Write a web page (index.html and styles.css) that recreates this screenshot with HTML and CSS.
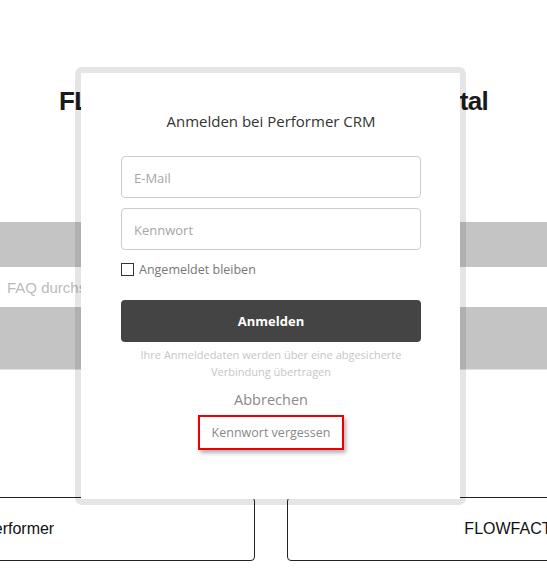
FILE: index.html
```html
<!DOCTYPE html>
<html lang="de">
<head>
<meta charset="utf-8">
<title>Anmelden bei Performer CRM</title>
<link rel="stylesheet" href="styles.css">
</head>
<body>
<div class="page">
  <h1 class="page-title">FLOWFACT Performer Kundenportal</h1>
  <div class="bar bar-top"></div>
  <div class="search-row"><span class="search-placeholder">FAQ durchsuchen</span></div>
  <div class="bar bar-bottom"></div>
  <div class="cards">
    <div class="card card-left">FLOWFACT Performer</div>
    <div class="card card-right">FLOWFACT Performer CRM</div>
  </div>
</div>

<div class="modal">
  <div class="modal-content">
    <h2 class="modal-title">Anmelden bei Performer CRM</h2>
    <div class="field"><span class="placeholder">E-Mail</span></div>
    <div class="field"><span class="placeholder">Kennwort</span></div>
    <label class="remember"><span class="checkbox"></span>Angemeldet bleiben</label>
    <div class="btn-login">Anmelden</div>
    <p class="secure-note">Ihre Anmeldedaten werden über eine abgesicherte<br>Verbindung übertragen</p>
    <div class="cancel">Abbrechen</div>
    <div class="forgot-wrap"><span class="forgot">Kennwort vergessen</span></div>
  </div>
</div>
</body>
</html>
```

FILE: styles.css
```css
html, body {
  margin: 0;
  padding: 0;
  background: #fff;
}
body {
  font-family: "Liberation Sans", Arial, sans-serif;
  color: #222;
  overflow: hidden;
  width: 547px;
  height: 579px;
  position: relative;
}

/* background page */
.page {
  display: flex;
  flex-direction: column;
}
.page-title {
  margin: 86px 0 0 0;
  font-size: 26px;
  line-height: 30px;
  font-weight: bold;
  letter-spacing: -0.75px;
  text-align: center;
  white-space: nowrap;
  color: #1a1a1a;
}
.bar {
  background: #c4c4c4;
}
.bar-top {
  margin-top: 106px;
  height: 45px;
}
.search-row {
  height: 40px;
  display: flex;
  align-items: center;
  padding-left: 7px;
}
.search-placeholder {
  font-size: 15px;
  color: #bbb;
}
.bar-bottom {
  height: 62px;
  border-bottom: 1px solid #e0e0e0;
}
.cards {
  display: flex;
  gap: 32px;
  margin-top: 127px;
  margin-left: -297px;
}
.card {
  flex: 0 0 552px;
  height: 64px;
  border: 1px solid #222;
  border-radius: 4px;
  box-sizing: border-box;
  display: flex;
  align-items: center;
  justify-content: center;
  font-size: 16px;
  color: #111;
  white-space: nowrap;
}
.card-left {
  padding-right: 12px;
}
.card-right {
  padding-left: 6px;
}

/* modal */
.modal {
  position: absolute;
  left: 75px;
  top: 67px;
  width: 391px;
}
.modal-content {
  box-sizing: border-box;
  border: 6px solid rgba(0, 0, 0, 0.1);
  border-radius: 7px;
  background: #fff;
  background-clip: padding-box;
  padding: 38px 39px 49px 40px;
  display: flex;
  flex-direction: column;
  align-items: stretch;
  font-family: "Open Sans", "Noto Sans", sans-serif;
}
.modal-title {
  margin: 0 0 25px 0;
  font-size: 15px;
  line-height: 20px;
  font-weight: normal;
  text-align: center;
  color: #333;
}
.field {
  height: 42px;
  box-sizing: border-box;
  border: 1px solid #ccc;
  border-radius: 4px;
  display: flex;
  align-items: center;
  padding-left: 12px;
  margin-bottom: 10px;
}
.placeholder {
  font-size: 13px;
  line-height: 18px;
  padding-top: 2px;
  color: #a6a6a6;
}
.remember {
  display: flex;
  align-items: center;
  height: 20px;
  margin-top: -1px;
  font-size: 12.5px;
  color: #777;
}
.checkbox {
  width: 11px;
  height: 11px;
  border: 1px solid #333;
  background: #fff;
  margin-right: 5px;
}
.btn-login {
  margin-top: 21px;
  height: 42px;
  background: #444;
  border-radius: 4px;
  color: #fff;
  font-weight: bold;
  font-size: 13px;
  display: flex;
  align-items: center;
  justify-content: center;
}
.secure-note {
  margin: 4px 0 0 0;
  font-size: 11px;
  line-height: 17px;
  color: #c6c6c6;
  text-align: center;
}
.cancel {
  margin-top: 10px;
  font-size: 14.5px;
  line-height: 20px;
  color: #8a8a8a;
  text-align: center;
}
.forgot-wrap {
  margin-top: 5px;
  display: flex;
  justify-content: center;
}
.forgot {
  display: inline-flex;
  align-items: center;
  height: 35px;
  box-sizing: border-box;
  padding: 0 12px;
  border: 2px solid #e00;
  box-shadow: 2px 3px 4px rgba(0, 0, 0, 0.3);
  font-size: 12.5px;
  color: #888;
}
```
